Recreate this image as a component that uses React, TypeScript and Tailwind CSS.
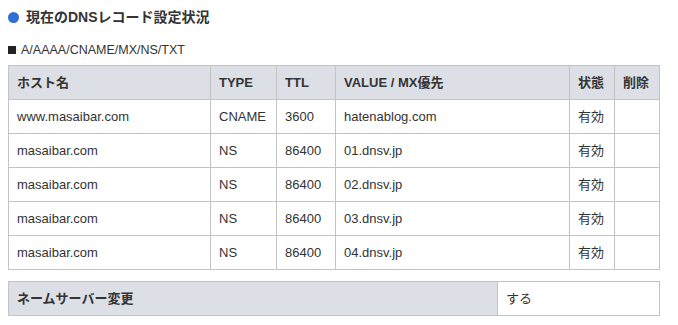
import React from 'react';

const RECORDS = [
  { host: 'www.masaibar.com', type: 'CNAME', ttl: '3600', value: 'hatenablog.com', status: '有効' },
  { host: 'masaibar.com', type: 'NS', ttl: '86400', value: '01.dnsv.jp', status: '有効' },
  { host: 'masaibar.com', type: 'NS', ttl: '86400', value: '02.dnsv.jp', status: '有効' },
  { host: 'masaibar.com', type: 'NS', ttl: '86400', value: '03.dnsv.jp', status: '有効' },
  { host: 'masaibar.com', type: 'NS', ttl: '86400', value: '04.dnsv.jp', status: '有効' },
];

const th = 'border border-[#c3c3c3] bg-[#dcdfe5] px-[8px] text-left font-bold';
const td = 'border border-[#c3c3c3] px-[8px]';

export default function App() {
  return (
    <div
      className="w-[678px] h-[325px] bg-white pl-[8px] text-[13px] text-[#333]"
      style={{ fontFamily: '"Liberation Sans", "Noto Sans CJK JP", sans-serif' }}
    >
      {/* Section title */}
      <div className="h-[34px] flex items-center gap-[7px]">
        <span className="w-[11px] h-[11px] rounded-full bg-[#2f6fd8]" />
        <h2 className="text-[14px] font-bold text-[#333]">現在のDNSレコード設定状況</h2>
      </div>

      <div className="mt-[6px] h-[20px] flex items-center gap-[5px] text-[12.5px]">
        <span className="w-[8px] h-[8px] bg-[#222]" />
        <span>A/AAAA/CNAME/MX/NS/TXT</span>
      </div>

      {/* Record table */}
      <table className="mt-[5px] w-[651px] table-fixed border-collapse">
        <colgroup>
          <col className="w-[202px]" />
          <col className="w-[66px]" />
          <col className="w-[59px]" />
          <col className="w-[234px]" />
          <col className="w-[45px]" />
          <col className="w-[45px]" />
        </colgroup>
        <thead>
          <tr className="h-[34px]">
            <th className={th}>ホスト名</th>
            <th className={th}>TYPE</th>
            <th className={th}>TTL</th>
            <th className={th}>VALUE / MX優先</th>
            <th className={th}>状態</th>
            <th className={th}>削除</th>
          </tr>
        </thead>
        <tbody>
          {RECORDS.map((r, i) => (
            <tr key={i} className="h-[34px]">
              <td className={td}>{r.host}</td>
              <td className={td}>{r.type}</td>
              <td className={td}>{r.ttl}</td>
              <td className={td}>{r.value}</td>
              <td className={td}>{r.status}</td>
              <td className={td}></td>
            </tr>
          ))}
        </tbody>
      </table>

      {/* Name server change */}
      <table className="mt-[11px] w-[651px] table-fixed border-collapse">
        <colgroup>
          <col className="w-[489px]" />
          <col className="w-[162px]" />
        </colgroup>
        <tbody>
          <tr className="h-[34px]">
            <th className={th}>ネームサーバー変更</th>
            <td className={td}>する</td>
          </tr>
        </tbody>
      </table>
    </div>
  );
}
